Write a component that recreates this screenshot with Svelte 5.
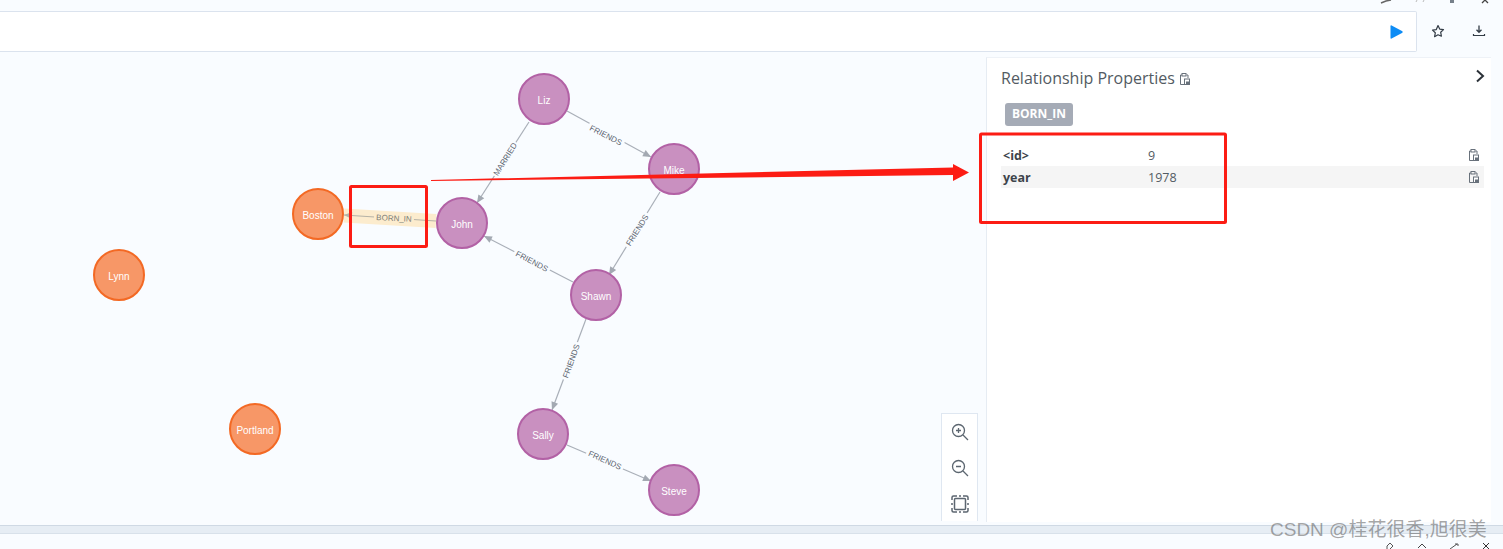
<script>
  const nodes = [
    { n: 'Liz', x: 544, y: 99, c: 'p' }, { n: 'Mike', x: 674, y: 169, c: 'p' },
    { n: 'John', x: 462, y: 223, c: 'p' }, { n: 'Boston', x: 318, y: 214, c: 'o' },
    { n: 'Lynn', x: 119, y: 275, c: 'o' }, { n: 'Shawn', x: 596, y: 295, c: 'p' },
    { n: 'Portland', x: 255, y: 429, c: 'o' }, { n: 'Sally', x: 543, y: 434, c: 'p' },
    { n: 'Steve', x: 674, y: 490, c: 'p' }
  ];
  const edges = [
    { a: [567, 111], b: [651, 157], t: 'FRIENDS', m: [606, 135], r: 27 },
    { a: [529, 122], b: [477, 203], t: 'MARRIED', m: [505, 159], r: -58 },
    { a: [660, 192], b: [609, 275], t: 'FRIENDS', m: [637, 230], r: -58 },
    { a: [573, 282], b: [484, 236], t: 'FRIENDS', m: [532, 261], r: 28 },
    { a: [586, 319], b: [552, 410], t: 'FRIENDS', m: [571, 361], r: -70 },
    { a: [567, 445], b: [651, 481], t: 'FRIENDS', m: [605, 460], r: 24 },
    { a: [436, 221], b: [344, 215], t: 'BORN_IN', m: [394, 218], r: 3 }
  ];
  function head(e) {
    const dx = e.b[0] - e.a[0], dy = e.b[1] - e.a[1], l = Math.hypot(dx, dy);
    const ux = dx / l, uy = dy / l, s = 8, w = 3.5;
    const bx = e.b[0] - ux * s, by = e.b[1] - uy * s;
    return `${e.b[0]},${e.b[1]} ${bx - uy * w},${by + ux * w} ${bx + uy * w},${by - ux * w}`;
  }
  const props = [{ k: '<id>', v: '9' }, { k: 'year', v: '1978', alt: true }];
</script>

{#snippet clip()}
  <svg class="clip" viewBox="0 0 11 12" aria-hidden="true">
    <path d="M3 2H1.500v9.500H5M7.500 2H9v3" fill="none" stroke="#68717b" stroke-width="1" />
    <rect x="3" y="0.500" width="4" height="2.500" fill="none" stroke="#68717b" stroke-width="1" />
    <rect x="5.500" y="6" width="5" height="5.500" fill="#fff" stroke="#68717b" stroke-width="1" />
    <rect x="7" y="8.500" width="3" height="2.500" fill="#68717b" />
  </svg>
{/snippet}

<div class="page">
  <div class="chrome">
    <svg viewBox="0 0 14 4"><path d="M1 3l5-2 5-1" stroke="#666" fill="none" stroke-width="1.500"/></svg>
    <svg viewBox="0 0 14 4"><path d="M3 2l1-2M10 2l1-2" stroke="#bbb" fill="none"/></svg>
    <svg viewBox="0 0 14 4"><path d="M4 0h4v3H4z" fill="#77808a"/></svg>
    <svg viewBox="0 0 14 4"><path d="M3 3l3-3 3 3" stroke="#444" fill="none" stroke-width="1.300"/></svg>
  </div>

  <div class="query">
    <div class="editor">
      <svg class="play" viewBox="0 0 13 14"><path d="M0.500 1.200Q0.500 0 1.600 0.500L12.400 6.200Q13 7 12.400 7.800L1.600 13.500Q0.500 14 0.500 12.800Z" fill="#0d8cf5"/></svg>
    </div>
    <div class="actions">
      <svg viewBox="0 0 14 14"><path d="M7 1.500l1.700 3.600 3.800.5-2.800 2.700.7 3.900L7 10.800l-3.400 1.900.7-3.900-2.800-2.700 3.800-.5z" fill="none" stroke="#333c46" stroke-width="1.200" stroke-linejoin="round"/></svg>
      <svg viewBox="0 0 14 14"><path d="M7 1.500v6.500M4.500 5.800L7 8.300l2.500-2.500" fill="none" stroke="#333c46" stroke-width="1.300"/><path d="M1.500 10v1.500h11V10" fill="none" stroke="#333c46" stroke-width="1.200"/></svg>
    </div>
  </div>

  <div class="main">
    <div class="graph">
      <svg class="canvas" viewBox="0 52 987 473">
        <line x1="436" y1="221" x2="344" y2="215.500" stroke="#fcecce" stroke-width="14" />
        {#each edges as e}
          <line x1={e.a[0]} y1={e.a[1]} x2={e.b[0]} y2={e.b[1]} stroke={e.t === 'BORN_IN' ? '#b5b2a6' : '#a9afb8'} stroke-width="1.200" />
          <polygon points={head(e)} fill={e.t === 'BORN_IN' ? '#b5b2a6' : '#a3a9b2'} />
          <g transform="translate({e.m[0]} {e.m[1]}) rotate({e.r})">
            <rect x="-20" y="-5" width="40" height="10" fill={e.t === 'BORN_IN' ? '#fcecce' : '#f9fcff'} />
            <text class="rel" class:born={e.t === 'BORN_IN'} text-anchor="middle" y="3">{e.t}</text>
          </g>
        {/each}
        {#each nodes as d}
          <circle cx={d.x} cy={d.y} r="25" class={d.c} />
          <text class="name" x={d.x} y={d.y + 5} text-anchor="middle">{d.n}</text>
        {/each}
      </svg>
      <div class="zoom">
        <svg viewBox="0 0 18 18"><circle cx="7.500" cy="7.500" r="6" /><path d="M5 7.500h5M7.500 5v5M12 12l5 5" /></svg>
        <svg viewBox="0 0 18 18"><circle cx="7.500" cy="7.500" r="6" /><path d="M5 7.500h5M12 12l5 5" /></svg>
        <svg class="fit" viewBox="0 0 18 18"><rect x="3.500" y="3.500" width="11" height="11" rx="1" /><path d="M1 5V2.500Q1 1 2.500 1H6M12 1h3.500Q17 1 17 2.500V5M1 8v2M17 8v2M8 1h2M8 17h2M17 13v2.500Q17 17 15.500 17H12M6 17H2.500Q1 17 1 15.500V13" /></svg>
      </div>
    </div>

    <aside class="panel">
      <div class="head">
        <h2>Relationship Properties</h2>
        {@render clip()}
        <svg class="chev" viewBox="0 0 10 14"><path d="M2 1.500L8 7l-6 5.500" fill="none" stroke="#2b3138" stroke-width="2"/></svg>
      </div>
      <span class="tag">BORN_IN</span>
      <div class="rows">
        {#each props as p}
          <div class="row" class:alt={p.alt}>
            <b>{p.k}</b><span class="val">{p.v}</span>{@render clip()}
          </div>
        {/each}
      </div>
    </aside>
  </div>

  <div class="sep"></div>
  <div class="bottom">
    <svg viewBox="0 0 12 6"><path d="M3 6V3l3-3 3 3-3 3" fill="none" stroke="#555"/></svg>
    <svg viewBox="0 0 12 6"><path d="M2 5l4-4 4 4" fill="none" stroke="#444"/></svg>
    <svg viewBox="0 0 12 6"><path d="M2 6l7-5M7 1h3v2" fill="none" stroke="#555"/></svg>
    <svg viewBox="0 0 12 6"><path d="M3 0l6 6M9 0L3 6" fill="none" stroke="#333"/></svg>
  </div>

  <svg class="notes" viewBox="0 0 1503 549">
    <rect x="350.500" y="186.500" width="76" height="60" rx="1" />
    <rect x="980.500" y="134" width="245" height="88.500" rx="1" />
    <polygon class="arrow" points="431,180 953,167.500 953,164 969,172.500 953,181 953,175 431,181" />
  </svg>

  <span class="mark">CSDN @桂花很香,旭很美</span>
</div>

<style>
  :global(body) { margin: 0; }
  .page {
    position: relative; width: 1503px; height: 549px; overflow: hidden;
    display: flex; flex-direction: column; background: #f9fcff;
    font-family: "Open Sans", "Noto Sans", sans-serif;
  }
  .chrome { height: 11px; display: flex; justify-content: flex-end; gap: 19px; padding-right: 10px; }
  .chrome svg { width: 14px; height: 4px; }
  .query { height: 41px; display: flex; box-sizing: border-box; }
  .editor {
    width: 1417px; box-sizing: border-box; background: #fff;
    border: 1px solid #dbe3ee; border-left: 0; border-radius: 0 2px 2px 0;
    display: flex; align-items: center; justify-content: flex-end; padding-right: 13px;
  }
  .play { width: 13px; height: 14px; }
  .actions { flex: 1; display: flex; align-items: center; padding: 0 0 2px 14px; gap: 27px; }
  .actions svg { width: 14px; height: 14px; }
  .main { height: 473px; display: flex; }
  .graph { position: relative; width: 987px; flex: none; }
  .canvas { display: block; width: 987px; height: 473px; }
  .p { fill: #c990c0; stroke: #b261a5; stroke-width: 2; }
  .o { fill: #f79767; stroke: #f36924; stroke-width: 2; }
  .name { font: 10px "Liberation Sans", sans-serif; fill: #fff; }
  .rel { font: 8px "Liberation Sans", sans-serif; fill: #59636e; }
  .rel.born { fill: #7c8078; }
  .zoom {
    position: absolute; left: 941px; top: 361px; width: 37px; height: 108px; box-sizing: border-box;
    background: #fff; border: 1px solid #dfe7f1; border-bottom: 0;
    display: flex; flex-direction: column; align-items: center; gap: 18px; padding-top: 9px;
  }
  .zoom svg { width: 18px; height: 18px; fill: none; stroke: #5c6670; stroke-width: 1.300; }
  .zoom .fit { stroke-width: 1.500; }
  .panel {
    width: 505px; height: 465px; margin-top: 5px; margin-left: -1px; box-sizing: border-box; background: #fff;
    border-left: 1px solid #e6ecf3; border-top: 1px solid #eef2f7; padding: 9px 7px 0 14px;
    display: flex; flex-direction: column; align-items: flex-start;
  }
  .head { display: flex; align-items: center; width: 100%; height: 22px; gap: 4px; }
  h2 { margin: 0; font-weight: 400; font-size: 16px; color: #535b63; }
  .clip { width: 11px; height: 12px; flex: none; margin-top: 2px; }
  .chev { width: 10px; height: 14px; margin-left: auto; margin-top: -4px; margin-right: -1px; }
  .tag {
    margin: 14px 0 0 4px; padding: 0 7px; height: 23px; line-height: 22px; box-sizing: border-box;
    background: #a5abb6; color: #fff; font-weight: 700; font-size: 12px; border-radius: 3px;
  }
  .rows { width: 100%; margin-top: 18px; }
  .row {
    height: 22px; display: flex; align-items: center; padding: 0 4px 0 2px;
    font-size: 12.500px; color: #535b63; box-sizing: border-box;
  }
  .row.alt { background: #f5f5f5; }
  .row b { width: 145px; color: #3d444b; font-weight: 700; }
  .val { flex: 1; }
  .row .clip { margin: -1px 1px 0 0; }
  .sep { height: 9px; background: #e6edf4; border-top: 1px solid #cfd9e4; border-bottom: 1px solid #d8e1ea; box-sizing: border-box; }
  .bottom { flex: 1; display: flex; justify-content: flex-end; align-items: flex-end; gap: 20px; padding-right: 11px; }
  .bottom svg { width: 12px; height: 6px; }
  .notes { position: absolute; left: 0; top: 0; width: 1503px; height: 549px; pointer-events: none; }
  .notes rect { fill: none; stroke: #fc1c14; stroke-width: 3; }
  .arrow { fill: #fc1c14; }
  .mark {
    position: absolute; left: 1270px; top: 518px; font-size: 19px; line-height: 24px;
    font-family: "Liberation Sans", "Noto Sans CJK SC", sans-serif; color: rgba(90, 90, 90, 0.55); white-space: nowrap;
  }
</style>
